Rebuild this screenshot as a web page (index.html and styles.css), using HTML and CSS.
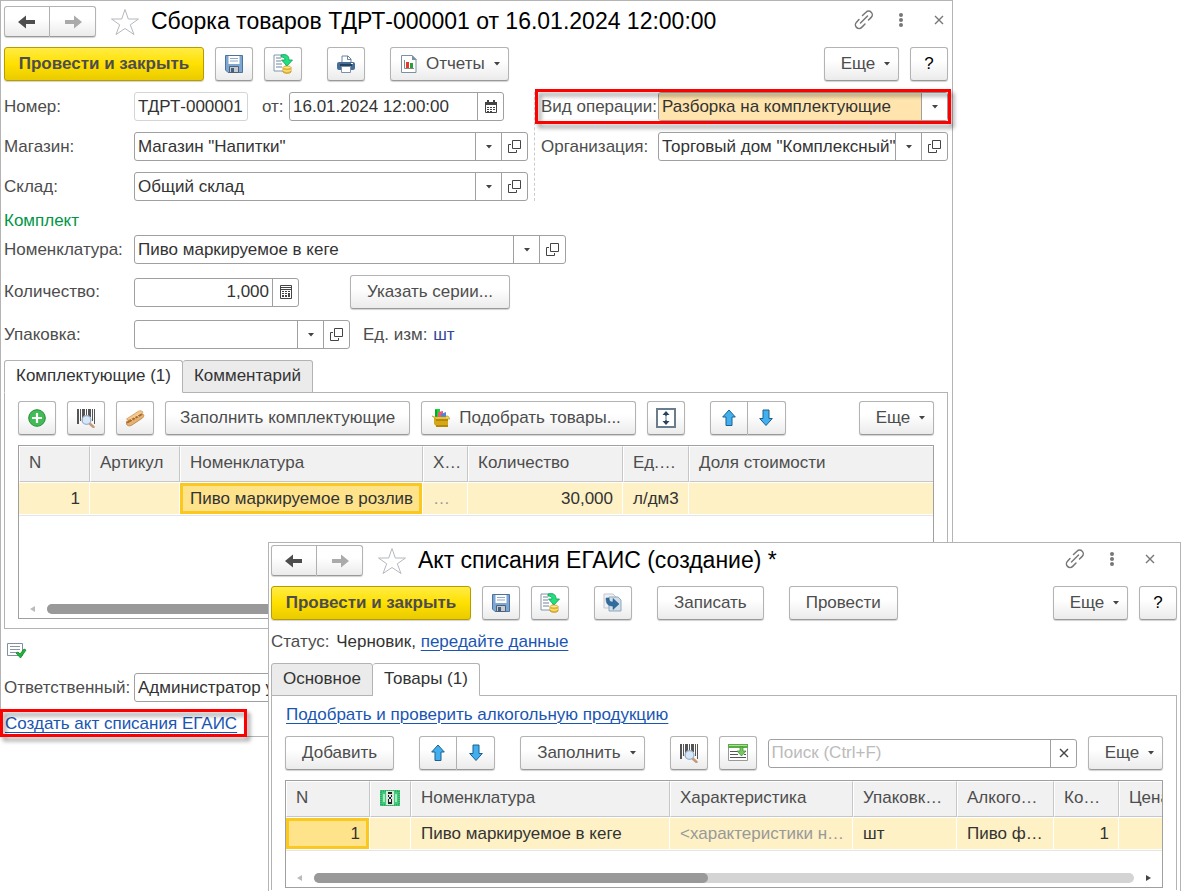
FILE: index.html
```html
<!DOCTYPE html>
<html lang="ru">
<head>
<meta charset="utf-8">
<title>Сборка товаров</title>
<link rel="stylesheet" href="styles.css">
</head>
<body>
<svg class="sprite" aria-hidden="true">
  <symbol id="i-back" viewBox="0 0 18 14"><path d="M0 7 8 .5V5h9v4H8v4.500z"/></symbol>
  <symbol id="i-forward" viewBox="0 0 18 14"><path d="M18 7 10 .5V5H1v4h9v4.500z"/></symbol>
  <symbol id="i-star" viewBox="0 0 30 28"><path d="M15 1.500 18.300 11H28.500L20.300 16.800 24 26.500 15 20.500 6 26.500 9.700 16.800 1.500 11H11.700z" fill="#fff" stroke="#b4b9be"/></symbol>
  <symbol id="i-link" viewBox="0 0 20 20"><g fill="none" stroke="#777" stroke-width="1.500" stroke-linecap="round"><path d="M8.500 5.500 12 2.200a3.600 3.600 0 0 1 5.200 5.200L14.500 10"/><path d="M5 9.500 2.500 12.200a3.600 3.600 0 0 0 5.200 5.200L11 14"/><path d="m6.500 13 7-7"/></g></symbol>
  <symbol id="i-dots" viewBox="0 0 6 16"><g fill="#777"><circle cx="3" cy="3" r="2"/><circle cx="3" cy="8" r="2"/><circle cx="3" cy="13" r="2"/></g></symbol>
  <symbol id="i-close" viewBox="0 0 10 10"><path d="m1 1 8 8M9 1 1 9" fill="none" stroke="currentColor" stroke-width="1.400"/></symbol>
  <symbol id="i-caret" viewBox="0 0 6 4"><path d="M0 0h6L3 3.500z" fill="#444"/></symbol>
  <symbol id="i-open" viewBox="0 0 14 14"><path d="M4.500.500h8v8h-8zM3 4.500H.500v8h8V10" fill="none" stroke="#444"/></symbol>
  <symbol id="i-calendar" viewBox="0 0 14 14"><path d="M1.500 2.500h11v10h-11z" fill="#fff" stroke="#444"/><path d="M1 2h12v3H1zM3 0h2v3H3zM9 0h2v3H9z" fill="#444"/><path d="M3 7h2v1H3zm3 0h2v1H6zm3 0h2v1H9zM3 9h2v1H3zm3 0h2v1H6zm3 0h2v1H9zM3 11h2v1H3zm3 0h2v1H6z" fill="#444"/></symbol>
  <symbol id="i-calc" viewBox="0 0 12 14"><path d="M.5.5h11v13H.5zM.5 4.500h11" fill="none" stroke="#444"/><path d="M1 2h10v1H1zM2 6h2v1H2zm3 0h2v1H5zm3 0h2v1H8zM2 8h2v1H2zm3 0h2v1H5zm3 0h2v4H8zM2 10h2v2H2zm3 0h2v2H5z" fill="#444"/></symbol>
  <symbol id="i-save" viewBox="0 0 18 18"><path d="M.5.500h17v17H3L.500 15z" fill="#7ea6d3" stroke="#4d729f"/><path d="M3.500 1h11v8h-11z" fill="#fff"/><path d="M5 3.500h8M5 6h8" stroke="#91a9c4"/><path d="M4.500 11.500h9v6h-9z" fill="#c5cbd0" stroke="#4d6279"/><path d="M6 13h3v4H6z" fill="#465e78"/></symbol>
  <symbol id="i-post" viewBox="0 0 20 20"><path d="M1 1h12v16H1z" fill="#fff" stroke="#8396a8"/><path d="M3 4h5M3 7h5M3 10h6M3 13h6" stroke="#6e8498"/><path d="M8 1c5-1 8 0 8 5h3.500L14 12 8.500 6H12c0-2-1-3-4-3z" fill="#22df80" stroke="#0a9e50" stroke-width=".8"/><path d="M10 13.500v4.500c1.500 1.800 7 1.800 8 0v-4.500z" fill="#eebd31" stroke="#b28413" stroke-width=".7"/><ellipse cx="14" cy="13.500" rx="4" ry="1.500" fill="#ffe887" stroke="#c89820" stroke-width=".7"/><path d="M10 16c2 1.500 6 1.500 8 0" fill="none" stroke="#fff0a0"/></symbol>
  <symbol id="i-print" viewBox="0 0 18 18"><path d="M5 8V1h6l3 3v4" fill="#fff" stroke="#6b8299"/><path d="M10.500 1v3.500H14" fill="none" stroke="#6b8299"/><rect y="7" width="18" height="8" rx="2" fill="#476d97"/><path d="M3 10h12" stroke="#23425f" stroke-width="2"/><path d="M4.500 11.500h9v6h-9z" fill="#fff" stroke="#7d91a5"/><path d="M14 8.500h2" stroke="#fff"/></symbol>
  <symbol id="i-report" viewBox="0 0 16 18"><path d="M.5.500H11L15 4.500v13H.500z" fill="#fff" stroke="#7b90a0"/><path d="M11 0v5h5z" fill="#7b90a0"/><path d="M3.500 5v8.500H13" fill="none" stroke="#888"/><path d="M5 7h3v6H5z" fill="#e33a2e"/><path d="M9 8h3v5H9z" fill="#28a03b"/></symbol>
  <symbol id="i-add" viewBox="0 0 18 18"><circle cx="9" cy="9" r="8.300" fill="#42bd55" stroke="#268b39"/><path d="M9 4v10M4 9h10" stroke="#fff" stroke-width="2.200"/></symbol>
  <symbol id="i-barcode" viewBox="0 0 18 19"><path d="M0 0h2v15H0zM3 0h1v12H3zM5 0h3v12H5zM9 0h1v8H9zM11 0h3v8h-3zM15 0h1v12h-1zM17 0h1v15h-1z" fill="#555"/><path d="m12 14 4.500 4" stroke="#c49a7b" stroke-width="2.400" stroke-linecap="round"/><circle cx="9.500" cy="11" r="4.400" fill="#d5e7fb" stroke="#9eafc4" stroke-width="1.300"/></symbol>
  <symbol id="i-scan" viewBox="0 0 20 18"><path d="M1.500 10 13 2.500c2-1.500 5-.5 5 1L7 13z" fill="#f2c78d" stroke="#cf9a5c" stroke-width=".8"/><path d="M1.500 12.500 17 5c2 0 2.500 2 .5 4L7 16c-2 1.500-5 1-5.500-1z" fill="#e4b273" stroke="#b67d3d" stroke-width=".8"/><path d="M2.500 13.500 16.500 5.500" stroke="#a9672c" stroke-width="1.500" stroke-linecap="round"/><path d="m6 9.500 1.500 2M9 7.500l1.500 2M12 6l1.500 2" stroke="#ffe3b0"/></symbol>
  <symbol id="i-pick" viewBox="0 0 18 18"><path d="M3 0h5v8H3z" fill="#19d33a"/><path d="M3 1h2v7H3z" fill="#0fa52b"/><path d="m6 3 5-1v6H6z" fill="#ef5874"/><path d="M9 5 14 3v5H9z" fill="#4f84dc"/><path d="M2 9h14v8H4l-2-2z" fill="#d5a916"/><path d="m0 7 4 3h14l-2-3H14v1H3z" fill="#f3d75d" stroke="#b8920e" stroke-width=".6"/><path d="M4 10h12v2H4z" fill="#b78808"/><path d="M4 16h12v2H4z" fill="#b88907"/></symbol>
  <symbol id="i-height" viewBox="0 0 20 20"><path d="M1 1h18v18H1z" fill="#fff" stroke="#6b7d8d" stroke-width="2"/><path d="m10 3 3.500 4h-7zM10 17l3.500-4h-7z" fill="#24445f"/><path d="M10 7v1.500M10 9.500v1M10 11.500V13" stroke="#24445f" stroke-width="1.500"/></symbol>
  <symbol id="i-up" viewBox="0 0 14 18"><path d="M7 1 13.300 8H10v8.500H4V8H.700z" fill="#42b0ef" stroke="#1b608f"/></symbol>
  <symbol id="i-down" viewBox="0 0 14 18"><path d="M7 16.500.700 9.500H4V1h6v8.500h3.300z" fill="#42b0ef" stroke="#1b608f"/></symbol>
  <symbol id="i-check" viewBox="0 0 20 16"><path d="M.5.500h15v12H.500z" fill="#fff" stroke="#8191a0"/><path d="M3 3.500h10M3 6.500h10M3 9.500h7" stroke="#8797a5"/><path d="m9 10 2-1 2 2 4-5 2 1-5.500 8z" fill="#1fb43a" stroke="#11852a" stroke-width=".8"/></symbol>
  <symbol id="i-copy" viewBox="0 0 20 20"><path d="M1 1h9l3 3v11H1z" fill="#eef1f4" stroke="#bec7cf"/><path d="M8 4h7l3 3v11H6V4z" fill="#d0deeb" stroke="#90a7bb"/><path d="M3 5h3c0 3 1 4 4 4V5.500l6 5.500-6 5.500V13c-5 0-7-2-7-8z" fill="#316c9e" stroke="#23567f" stroke-width=".5"/></symbol>
  <symbol id="i-table" viewBox="0 0 20 18"><path d="M.5.500h19v16H.500z" fill="#fff" stroke="#999"/><path d="M0 0h20v4H0z" fill="#58ad45"/><path d="M1 1.500h18" stroke="#b0dd93"/><path d="M2 7.500h8M2 10.500h8M2 13.500h16M15 7.500h3M16 10.500h2" stroke="#555"/><path d="M12 3h3v4h3l-4.500 5L9 7h3z" fill="#79c760" stroke="#3c8d2b" stroke-width=".7"/></symbol>
  <symbol id="i-stamp" viewBox="0 0 20 16"><path d="M0 0h20v16H0z" fill="#42c879"/><path d="M1 1h18v14H1z" fill="none" stroke="#258e52" stroke-dasharray="1 1"/><path d="M4 4v8M16 4v8" stroke="#c6f4d8" stroke-width="1.500"/><path d="M6 1h8v14H6z" fill="#dbe8df"/><path d="M8 2h4v2H8zm0 3h1v2H8zm3 0h1v2h-1zM9 7h2v2H9zm-1 2h1v3H8zm3 0h1v3h-1zm-3 3h4v2H8z" fill="#222"/></symbol>
</svg>

<main class="desktop">
  <section class="window window-main" aria-labelledby="title-main">
    <header class="titlebar">
      <div class="pair nav">
        <button type="button" class="btn" aria-label="Назад"><svg width="18" height="14"><use href="#i-back"/></svg></button>
        <button type="button" class="btn muted" aria-label="Вперед"><svg width="18" height="14"><use href="#i-forward"/></svg></button>
      </div>
      <button type="button" class="plain star" aria-label="В избранное"><svg width="30" height="28"><use href="#i-star"/></svg></button>
      <h1 id="title-main">Сборка товаров ТДРТ-000001 от 16.01.2024 12:00:00</h1>
      <div class="winctl">
        <button type="button" class="plain" aria-label="Получить ссылку"><svg width="20" height="20"><use href="#i-link"/></svg></button>
        <button type="button" class="plain" aria-label="Меню"><svg width="6" height="16"><use href="#i-dots"/></svg></button>
        <button type="button" class="plain" aria-label="Закрыть"><svg width="10" height="10"><use href="#i-close"/></svg></button>
      </div>
    </header>

    <div class="toolbar">
      <button type="button" class="btn primary">Провести и закрыть</button>
      <button type="button" class="btn icon" aria-label="Записать"><svg width="18" height="18"><use href="#i-save"/></svg></button>
      <button type="button" class="btn icon" aria-label="Провести"><svg width="20" height="20"><use href="#i-post"/></svg></button>
      <button type="button" class="btn icon apart" aria-label="Печать"><svg width="18" height="18"><use href="#i-print"/></svg></button>
      <button type="button" class="btn menu with-icon apart"><svg width="16" height="18"><use href="#i-report"/></svg>Отчеты<svg class="caret"><use href="#i-caret"/></svg></button>
      <button type="button" class="btn menu more end">Еще<svg class="caret"><use href="#i-caret"/></svg></button>
      <button type="button" class="btn icon help">?</button>
    </div>

    <div class="form-cols">
      <div class="form-left">
        <div class="row">
          <label for="number">Номер:</label>
          <div class="field number"><input id="number" value="ТДРТ-000001" readonly></div>
          <label for="date" class="from">от:</label>
          <div class="field date"><input id="date" value="16.01.2024 12:00:00"><button type="button" aria-label="Календарь"><svg width="14" height="14"><use href="#i-calendar"/></svg></button></div>
        </div>
        <div class="row">
          <label for="shop">Магазин:</label>
          <div class="field grow"><input id="shop" value='Магазин "Напитки"'><button type="button" aria-label="Выбрать"><svg class="caret"><use href="#i-caret"/></svg></button><button type="button" aria-label="Открыть"><svg width="14" height="14"><use href="#i-open"/></svg></button></div>
        </div>
        <div class="row">
          <label for="store">Склад:</label>
          <div class="field grow"><input id="store" value="Общий склад"><button type="button" aria-label="Выбрать"><svg class="caret"><use href="#i-caret"/></svg></button><button type="button" aria-label="Открыть"><svg width="14" height="14"><use href="#i-open"/></svg></button></div>
        </div>
      </div>
      <div class="form-right">
        <div class="row marked marked-operation">
          <label for="operation">Вид операции:</label>
          <div class="field grow select"><select id="operation"><option>Разборка на комплектующие</option></select><span class="arrow"><svg class="caret"><use href="#i-caret"/></svg></span></div>
        </div>
        <div class="row">
          <label for="org">Организация:</label>
          <div class="field grow"><input id="org" value='Торговый дом "Комплексный"'><button type="button" aria-label="Выбрать"><svg class="caret"><use href="#i-caret"/></svg></button><button type="button" aria-label="Открыть"><svg width="14" height="14"><use href="#i-open"/></svg></button></div>
        </div>
      </div>
    </div>

    <h2 class="group-title">Комплект</h2>
    <div class="kit">
      <div class="row">
        <label for="item">Номенклатура:</label>
        <div class="field item"><input id="item" value="Пиво маркируемое в кеге"><button type="button" aria-label="Выбрать"><svg class="caret"><use href="#i-caret"/></svg></button><button type="button" aria-label="Открыть"><svg width="14" height="14"><use href="#i-open"/></svg></button></div>
      </div>
      <div class="row">
        <label for="qty">Количество:</label>
        <div class="field qty"><input id="qty" value="1,000"><button type="button" aria-label="Калькулятор"><svg width="12" height="14"><use href="#i-calc"/></svg></button></div>
        <button type="button" class="btn series">Указать серии...</button>
      </div>
      <div class="row">
        <label for="pack">Упаковка:</label>
        <div class="field pack"><input id="pack" value=""><button type="button" aria-label="Выбрать"><svg class="caret"><use href="#i-caret"/></svg></button><button type="button" aria-label="Открыть"><svg width="14" height="14"><use href="#i-open"/></svg></button></div>
        <span class="unit">Ед. изм: <span class="unit-value">шт</span></span>
      </div>
    </div>

    <div class="tabs" role="tablist">
      <button type="button" class="tab active" role="tab" aria-selected="true">Комплектующие (1)</button>
      <button type="button" class="tab" role="tab" aria-selected="false">Комментарий</button>
    </div>
    <div class="panel">
      <div class="toolbar">
        <button type="button" class="btn icon" aria-label="Добавить"><svg width="18" height="18"><use href="#i-add"/></svg></button>
        <button type="button" class="btn icon" aria-label="Поиск по штрихкоду"><svg width="18" height="19"><use href="#i-barcode"/></svg></button>
        <button type="button" class="btn icon" aria-label="Терминал сбора данных"><svg width="20" height="18"><use href="#i-scan"/></svg></button>
        <button type="button" class="btn tight">Заполнить комплектующие</button>
        <button type="button" class="btn tight with-icon"><svg width="18" height="18"><use href="#i-pick"/></svg>Подобрать товары...</button>
        <button type="button" class="btn icon" aria-label="Высота строк"><svg width="20" height="20"><use href="#i-height"/></svg></button>
        <div class="pair apart">
          <button type="button" class="btn" aria-label="Вверх"><svg width="14" height="18"><use href="#i-up"/></svg></button>
          <button type="button" class="btn" aria-label="Вниз"><svg width="14" height="18"><use href="#i-down"/></svg></button>
        </div>
        <button type="button" class="btn menu more end">Еще<svg class="caret"><use href="#i-caret"/></svg></button>
      </div>
      <div class="grid-box tall">
        <table class="grid">
          <colgroup><col class="w71"><col class="w90"><col class="w243"><col class="w45"><col class="w155"><col class="w66"><col></colgroup>
          <thead><tr><th>N</th><th>Артикул</th><th>Номенклатура</th><th class="whole">Х…</th><th>Количество</th><th class="whole">Ед.…</th><th>Доля стоимости</th></tr></thead>
          <tbody><tr><td class="num">1</td><td></td><td class="current whole">Пиво маркируемое в розлив</td><td class="faint">…</td><td class="num">30,000</td><td class="whole">л/дм3</td><td></td></tr></tbody>
        </table>
        <div class="scroll"><span class="scroll-left"></span><span class="track"><span class="thumb wide"></span></span><span class="scroll-right"></span></div>
      </div>
    </div>

    <div class="footer">
      <svg width="20" height="16" role="img" aria-label="Проведен"><use href="#i-check"/></svg>
      <div class="row">
        <label for="resp">Ответственный:</label>
        <div class="field item"><input id="resp" value="Администратор управляющий"></div>
      </div>
      <div class="marked marked-link"><a href="#act">Создать акт списания ЕГАИС</a></div>
    </div>
  </section>

  <section class="window window-act" id="act" aria-labelledby="title-act">
    <header class="titlebar">
      <div class="pair nav">
        <button type="button" class="btn" aria-label="Назад"><svg width="18" height="14"><use href="#i-back"/></svg></button>
        <button type="button" class="btn muted" aria-label="Вперед"><svg width="18" height="14"><use href="#i-forward"/></svg></button>
      </div>
      <button type="button" class="plain star" aria-label="В избранное"><svg width="30" height="28"><use href="#i-star"/></svg></button>
      <h1 id="title-act">Акт списания ЕГАИС (создание) *</h1>
      <div class="winctl">
        <button type="button" class="plain" aria-label="Получить ссылку"><svg width="20" height="20"><use href="#i-link"/></svg></button>
        <button type="button" class="plain" aria-label="Меню"><svg width="6" height="16"><use href="#i-dots"/></svg></button>
        <button type="button" class="plain" aria-label="Закрыть"><svg width="10" height="10"><use href="#i-close"/></svg></button>
      </div>
    </header>

    <div class="toolbar">
      <button type="button" class="btn primary">Провести и закрыть</button>
      <button type="button" class="btn icon" aria-label="Сохранить"><svg width="18" height="18"><use href="#i-save"/></svg></button>
      <button type="button" class="btn icon" aria-label="Провести документ"><svg width="20" height="20"><use href="#i-post"/></svg></button>
      <button type="button" class="btn icon apart" aria-label="Создать на основании"><svg width="20" height="20"><use href="#i-copy"/></svg></button>
      <button type="button" class="btn apart">Записать</button>
      <button type="button" class="btn apart">Провести</button>
      <button type="button" class="btn menu more end">Еще<svg class="caret"><use href="#i-caret"/></svg></button>
      <button type="button" class="btn icon help">?</button>
    </div>

    <p class="status"><span class="status-label">Статус:</span> <span>Черновик, <a href="#send">передайте данные</a></span></p>

    <div class="tabs" role="tablist">
      <button type="button" class="tab" role="tab" aria-selected="false">Основное</button>
      <button type="button" class="tab active" role="tab" aria-selected="true">Товары (1)</button>
    </div>
    <div class="panel open">
      <a class="check-link" href="#check">Подобрать и проверить алкогольную продукцию</a>
      <div class="toolbar">
        <button type="button" class="btn">Добавить</button>
        <div class="pair apart">
          <button type="button" class="btn" aria-label="Вверх"><svg width="14" height="18"><use href="#i-up"/></svg></button>
          <button type="button" class="btn" aria-label="Вниз"><svg width="14" height="18"><use href="#i-down"/></svg></button>
        </div>
        <button type="button" class="btn menu apart">Заполнить<svg class="caret"><use href="#i-caret"/></svg></button>
        <button type="button" class="btn icon apart" aria-label="Поиск по штрихкоду"><svg width="18" height="19"><use href="#i-barcode"/></svg></button>
        <button type="button" class="btn icon" aria-label="Загрузить"><svg width="20" height="18"><use href="#i-table"/></svg></button>
        <div class="field grow search"><input aria-label="Поиск" placeholder="Поиск (Ctrl+F)"><button type="button" aria-label="Очистить"><svg width="10" height="10"><use href="#i-close"/></svg></button></div>
        <button type="button" class="btn menu more">Еще<svg class="caret"><use href="#i-caret"/></svg></button>
      </div>
      <div class="grid-box">
        <table class="grid">
          <colgroup><col class="w84"><col class="w41"><col class="w259"><col class="w183"><col class="w104"><col class="w97"><col class="w65"><col></colgroup>
          <thead><tr><th>N</th><th><svg width="20" height="16" role="img" aria-label="Марка"><use href="#i-stamp"/></svg></th><th>Номенклатура</th><th>Характеристика</th><th class="whole">Упаковк…</th><th class="whole">Алкого…</th><th class="whole">Ко…</th><th class="whole">Цена</th></tr></thead>
          <tbody><tr><td class="num current">1</td><td></td><td>Пиво маркируемое в кеге</td><td class="faint whole">&lt;характеристики н…</td><td>шт</td><td class="whole">Пиво ф…</td><td class="num">1</td><td></td></tr></tbody>
        </table>
        <div class="scroll"><span class="scroll-left"></span><span class="track"><span class="thumb"></span></span><span class="scroll-right"></span></div>
      </div>
    </div>
  </section>
</main>
</body>
</html>
```
FILE: styles.css
```css
* { box-sizing: border-box; }

body {
  margin: 0;
  background: #fff;
  color: #4d4d4d;
  font: 17px/20px "Liberation Sans", Arial, sans-serif;
}

button, input, select { font: inherit; color: inherit; margin: 0; }
button { cursor: pointer; }
svg { display: block; flex: none; }
.sprite { position: absolute; width: 0; height: 0; }
a { color: #1a55b3; text-decoration: underline; text-underline-offset: 3px; text-decoration-thickness: 1px; }

/* Windows */
.desktop { position: relative; min-height: 891px; overflow: hidden; }
.window { background: #fff; border: 1px solid #b4b4b4; }
.window-main { margin-right: 229px; padding: 5px 4px 2px 3px; }
.window-act { position: absolute; top: 542px; left: 268px; right: 1px; padding: 2px 3px 2px 2px; }

.titlebar { display: flex; align-items: center; height: 31px; margin-bottom: 10px; }
.titlebar h1 { margin: 0 0 0 11px; padding-bottom: 2px; font-size: 23px; line-height: 28px; font-weight: 400; color: #000; white-space: nowrap; }
.plain { display: flex; padding: 0; border: 0; background: none; color: #777; }
.star { margin-left: 14px; }
.winctl { display: flex; align-items: center; margin-left: auto; padding: 0 4px 4px 0; gap: 24px; }
.window-act .winctl { padding-right: 22px; }
.winctl .plain:last-child { margin-left: 6px; }

/* Buttons */
.btn {
  display: flex;
  align-items: center;
  justify-content: center;
  height: 34px;
  padding: 0 16px;
  border: 1px solid #b3b3b3;
  border-bottom-color: #999;
  border-radius: 3px;
  background: linear-gradient(#fff 0%, #fff 40%, #ebebeb 100%);
  box-shadow: 0 1px 1px rgba(0, 0, 0, .18);
  color: #4d4d4d;
  white-space: nowrap;
  flex: none;
}
.primary {
  width: 200px;
  padding: 0;
  border-color: #b59c00;
  background: linear-gradient(#ffec45, #ffe000 50%, #e9cb00);
  font-weight: 700;
}
.tight { padding: 0 14px; }
.icon { width: 38px; padding: 0; }
.help { color: #000; }
.caret { width: 6px; height: 4px; }
.menu { padding-right: 8px; }
.menu .caret { margin-left: 9px; }
.more { width: 75px; padding: 0 8px 0 16px; }
.with-icon { padding-left: 10px; }
.with-icon svg:first-child { margin-right: 9px; }
.pair { display: flex; }
.pair .btn { width: 38px; padding: 0; }
.pair .btn:first-child { border-radius: 3px 0 0 3px; }
.pair .btn:last-child { border-left: 0; border-radius: 0 3px 3px 0; }
.nav .btn { width: 46px; height: 31px; fill: #4d4d4d; }
.nav .muted { fill: #aaa; }

.toolbar { display: flex; align-items: center; gap: 11px; }
.toolbar .apart { margin-left: 14px; }
.toolbar .end { margin-left: auto; }

/* Form */
.row { display: flex; align-items: center; min-height: 29px; }
.row > label { flex: none; width: 130px; white-space: nowrap; }
.field {
  display: flex;
  height: 29px;
  border: 1px solid #a0a0a0;
  border-radius: 3px;
  background: #fff;
  color: #333;
}
.field input, .field select { flex: 1; min-width: 0; width: 100%; padding: 0 0 0 3px; border: 0; background: none; outline: 0; }
.field input::placeholder { color: #bbb; opacity: 1; }
.field button { display: flex; flex: none; align-items: center; justify-content: center; width: 26px; padding: 0; border: 0; border-left: 1px solid #a0a0a0; background: none; color: #444; }
.grow { flex: 1; min-width: 0; }
.number { width: 114px; border-color: #d5d5d5; }
.row > .from { width: 27px; margin-left: 14px; }
.date { flex: 0 0 215px; }
.item { width: 432px; }
.qty { width: 165px; }
.field.qty input { padding-right: 3px; text-align: right; }
.pack { width: 216px; }
.series { margin-left: 51px; }
.unit { margin-left: 13px; }
.unit-value { margin-left: 1px; color: #36469a; }

.form-cols { display: grid; grid-template-columns: minmax(0, 524fr) minmax(0, 420fr); margin-top: 11px; }
.form-left, .form-right { display: flex; flex-direction: column; gap: 11px; }
.form-right { margin-left: 6px; padding-left: 6px; border-left: 1px dashed #ccc; }
.form-right .row > label { width: 117px; }
.select { position: relative; }
.select select { appearance: none; padding-right: 30px; background: #ffe5ad; border-radius: 2px; }
.arrow { position: absolute; top: 0; right: 0; bottom: 0; display: flex; align-items: center; justify-content: center; width: 26px; border-left: 1px solid #a0a0a0; background: #fff; pointer-events: none; }

.marked { position: relative; }
.marked::after { content: ""; position: absolute; border: 3px solid #f00; filter: drop-shadow(3px 4px 2px rgba(0, 0, 0, .4)); pointer-events: none; }
.marked-operation::after { inset: -3px -3px -3px -6px; }
.marked-link::after { inset: -5px -10px -3px -5px; }
.marked-link { width: max-content; }

.group-title { margin: 10px 0 4px; font-size: 17px; line-height: 20px; font-weight: 400; color: #009646; }
.kit { display: flex; flex-direction: column; gap: 11px; }

/* Tabs */
.tabs { display: flex; margin: 11px 0 -1px; position: relative; }
.tab { height: 33px; padding: 0 11px 2px; border: 1px solid #b3b3b3; border-radius: 3px 3px 0 0; background: #ebebeb; color: #333; }
.tab + .tab { border-left: 0; }
.tab.active { background: #fff; border-bottom-color: #fff; }
.panel { padding: 8px 13px 9px; border: 1px solid #b3b3b3; }
.panel.open { padding-bottom: 2px; border-bottom: 0; }
.check-link { display: block; width: max-content; margin: 1px 0 11px 1px; }

/* Tables */
.grid-box { display: flex; flex-direction: column; margin-top: 10px; min-height: 108px; border: 1px solid #a0a0a0; overflow: hidden; }
.grid-box.tall { min-height: 174px; }
.grid { width: 100%; table-layout: fixed; border-collapse: separate; border-spacing: 0; border-bottom: 1px solid #e5e5e5; }
.grid th, .grid td { overflow: hidden; padding: 0 9px 0 10px; text-align: left; font-weight: 400; white-space: nowrap; text-overflow: ellipsis; }
.grid th { height: 36px; border: 1px solid #fff; border-right-color: #c6c6c6; border-bottom-color: #c6c6c6; padding: 0 9px 2px; background: #f1f1f1; }
.grid td { height: 33px; border-top: 1px solid #fff; border-right: 1px solid #fff; border-bottom: 1px solid #fff; background: #fdf1c5; color: #333; }
.grid th:last-child, .grid td:last-child { border-right: 0; }
.grid .num { padding-right: 9px; text-align: right; }
.grid .current { background: #fee38b; box-shadow: inset 0 0 0 3px #fac81f; }
.grid .faint { color: #999; }
.grid .whole { padding-right: 0; text-overflow: clip; }
.w41 { width: 41px; } .w45 { width: 45px; } .w65 { width: 65px; } .w66 { width: 66px; }
.w71 { width: 71px; } .w84 { width: 84px; } .w90 { width: 90px; } .w97 { width: 97px; }
.w104 { width: 104px; } .w155 { width: 155px; } .w183 { width: 183px; }
.w243 { width: 243px; } .w259 { width: 259px; }

.scroll { display: flex; align-items: center; gap: 12px; height: 10px; margin: auto 11px 4px; }
.scroll-left, .scroll-right { width: 5px; border: solid transparent; border-width: 3px 0; }
.scroll-left { border-right: 5px solid #bbb; }
.scroll-right { border-left: 5px solid #444; }
.track { flex: 1; height: 10px; border-radius: 5px; background: #d4d4d4; }
.thumb { display: block; width: 48%; height: 10px; border-radius: 5px; background: #999; }
.thumb.wide { width: 80%; }

.footer { display: flex; flex-direction: column; gap: 14px; padding-top: 14px; }
.footer > svg { margin-left: 3px; }
.footer .marked-link { margin: -2px 0 0 1px; }
.status { margin: 12px 0 11px; color: #333; }
.status-label { margin-right: 2px; color: #4d4d4d; }
```
